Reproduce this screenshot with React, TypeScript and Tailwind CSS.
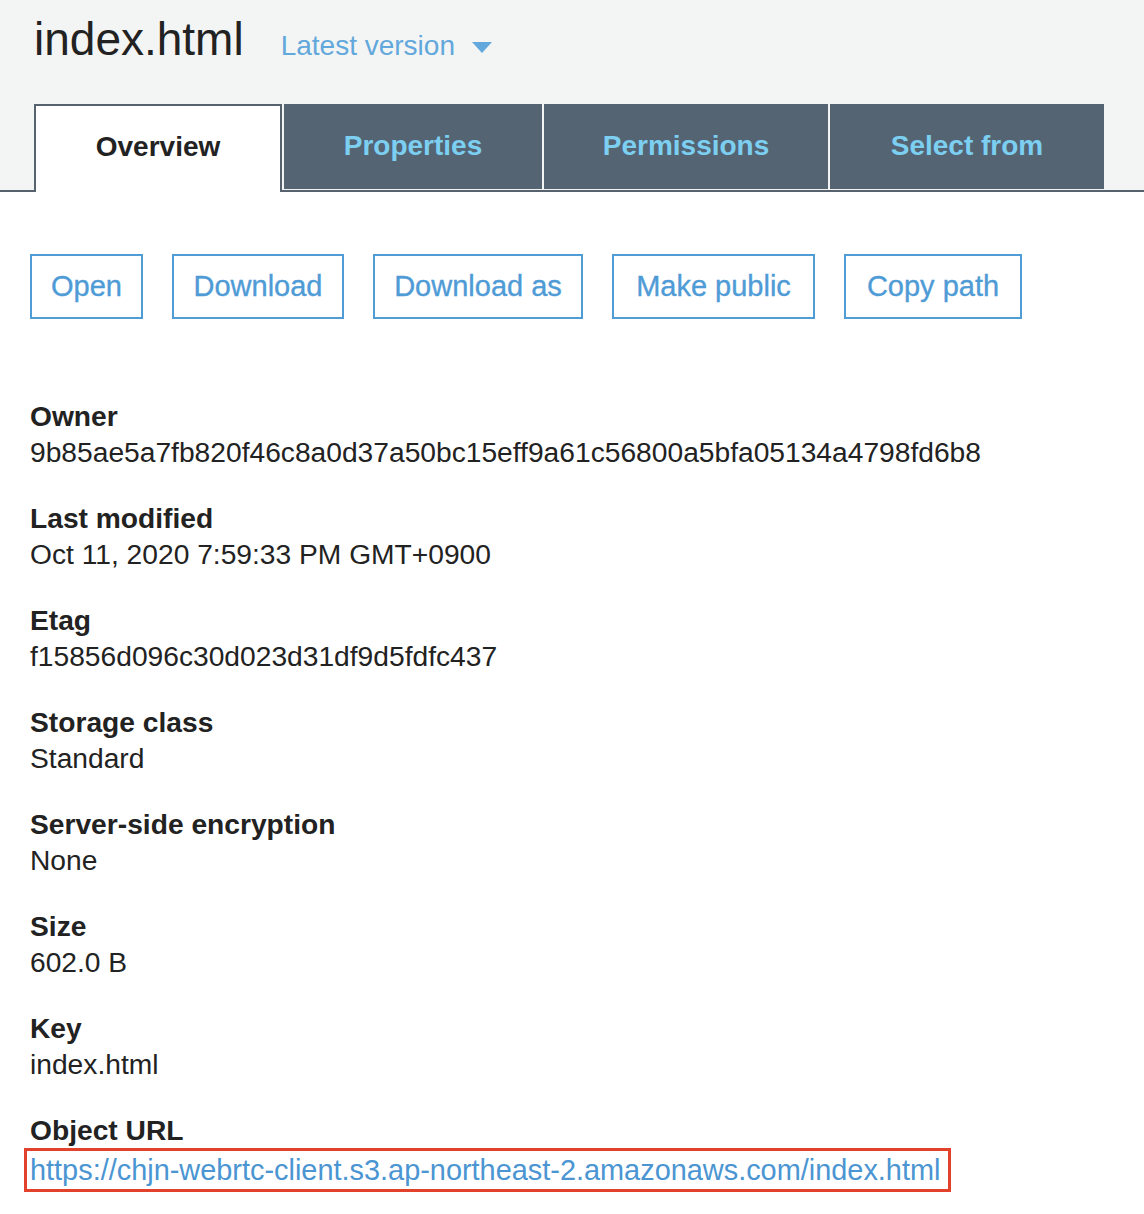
const tabs = [
  { label: "Properties", w: "w-[258px]" },
  { label: "Permissions", w: "w-[284px]" },
  { label: "Select from", w: "w-[274px]" },
];

const actions = [
  { label: "Open", w: "w-[113px]" },
  { label: "Download", w: "w-[172px]" },
  { label: "Download as", w: "w-[210px]" },
  { label: "Make public", w: "w-[203px]" },
  { label: "Copy path", w: "w-[178px]" },
];

const fields = [
  { label: "Owner", value: "9b85ae5a7fb820f46c8a0d37a50bc15eff9a61c56800a5bfa05134a4798fd6b8" },
  { label: "Last modified", value: "Oct 11, 2020 7:59:33 PM GMT+0900" },
  { label: "Etag", value: "f15856d096c30d023d31df9d5fdfc437" },
  { label: "Storage class", value: "Standard" },
  { label: "Server-side encryption", value: "None" },
  { label: "Size", value: "602.0 B" },
  { label: "Key", value: "index.html" },
];

export default function App() {
  return (
    <div
      className="min-h-[1214px] w-[1144px] bg-white text-[#222222]"
      style={{ fontFamily: '"Liberation Sans", Arial, sans-serif' }}
    >
      <div className="bg-[#f3f4f4] pt-[16px]">
        <div className="flex items-baseline px-[34px]">
          <h1 className="text-[46px] leading-none font-normal text-[#222222]">index.html</h1>
          <button className="ml-[37px] flex items-baseline text-[28px] leading-none text-[#62a8dc]">
            Latest version
            <svg width="20" height="12" viewBox="0 0 20 12" className="ml-[17px] self-center mt-[4px]">
              <path d="M0 0 L20 0 L10 11 Z" fill="#62a8dc" />
            </svg>
          </button>
        </div>

        <div className="mt-[42px] flex items-end border-b-2 border-[#56636f] pl-[34px]">
          <div className="-mb-[2px] flex h-[88px] w-[248px] items-center justify-center border-2 border-b-0 border-[#56636f] bg-white pb-[4px] text-[28px] font-bold text-[#222222]">
            Overview
          </div>
          {tabs.map((t) => (
            <div
              key={t.label}
              className={`mb-[1px] ml-[2px] flex h-[85px] ${t.w} items-center justify-center bg-[#546473] pb-[1px] text-[28px] font-bold text-[#7ccff0]`}
            >
              {t.label}
            </div>
          ))}
        </div>
      </div>

      <div className="px-[30px]">
        <div className="mt-[62px] flex gap-[29px]">
          {actions.map((a) => (
            <button
              key={a.label}
              className={`flex h-[65px] ${a.w} items-center justify-center border-2 border-[#509cd6] text-[29px] text-[#4f9bd6] [-webkit-text-stroke:0.35px_#4f9bd6]`}
            >
              {a.label}
            </button>
          ))}
        </div>

        <div className="mt-[79px] flex flex-col gap-[30px] text-[28.2px] leading-[36px]">
          {fields.map((f) => (
            <div key={f.label}>
              <div className="font-bold">{f.label}</div>
              <div>{f.value}</div>
            </div>
          ))}
          <div>
            <div className="font-bold">Object URL</div>
            <div className="-ml-[6px] inline-block border-[3px] border-[#e2412b] pl-[3px] pr-[8px] text-[28.9px] leading-[38px]">
              <a href="#" className="text-[#4a95d2]">
                https://chjn-webrtc-client.s3.ap-northeast-2.amazonaws.com/index.html
              </a>
            </div>
          </div>
        </div>
      </div>
    </div>
  );
}
